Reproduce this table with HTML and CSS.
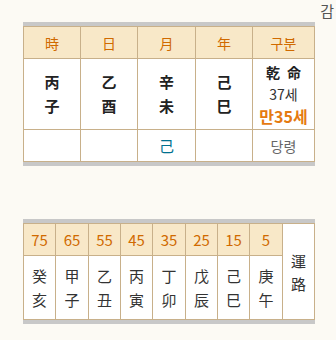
FILE: index.html
```html
<!DOCTYPE html>
<html lang="ko">
<head>
<meta charset="utf-8">
<link rel="stylesheet" href="styles.css">
</head>
<body>
<div class="topline"><span class="cut">감</span></div>

<div class="band">
  <div class="saju">
    <div class="h">時</div>
    <div class="h">日</div>
    <div class="h">月</div>
    <div class="h">年</div>
    <div class="h">구분</div>

    <div class="c pillar">丙<br>子</div>
    <div class="c pillar">乙<br>酉</div>
    <div class="c pillar">辛<br>未</div>
    <div class="c pillar">己<br>巳</div>
    <div class="c info">
      <div class="gm">乾 命</div>
      <div class="age">37세</div>
      <div class="man">만35세</div>
    </div>

    <div class="c"></div>
    <div class="c"></div>
    <div class="c blue">己</div>
    <div class="c"></div>
    <div class="c grey">당령</div>
  </div>
</div>

<div class="band second">
  <div class="daeun">
    <div class="h">75</div>
    <div class="h">65</div>
    <div class="h">55</div>
    <div class="h">45</div>
    <div class="h">35</div>
    <div class="h">25</div>
    <div class="h">15</div>
    <div class="h">5</div>
    <div class="c label">運<br>路</div>

    <div class="c ju">癸<br>亥</div>
    <div class="c ju">甲<br>子</div>
    <div class="c ju">乙<br>丑</div>
    <div class="c ju">丙<br>寅</div>
    <div class="c ju">丁<br>卯</div>
    <div class="c ju">戊<br>辰</div>
    <div class="c ju">己<br>巳</div>
    <div class="c ju">庚<br>午</div>
  </div>
</div>
</body>
</html>
```

FILE: styles.css
```css
html, body {
  margin: 0;
  padding: 0;
  background: #fcfaf4;
  font-family: "Noto Sans CJK KR", "Noto Sans", sans-serif;
}

.topline {
  height: 22px;
  display: flex;
  justify-content: flex-end;
  padding-right: 2px;
}

.cut {
  font-size: 15px;
  line-height: 22px;
  color: #555;
}

.band {
  width: 292px;
  margin-left: 23px;
  border-top: 4px solid #c8c8c8;
  border-bottom: 4px solid #c8c8c8;
}

.second {
  margin-top: 53px;
}

.saju,
.daeun {
  display: grid;
  background: #c8b08a;
  padding: 1px;
  gap: 1px;
}

.saju {
  grid-template-columns: 56px 56px 57px 56px 61px;
  grid-template-rows: 31px 70px 31px;
}

.daeun {
  grid-template-columns: 31px 32px 31px 31px 32px 31px 31px 32px 31px;
  grid-template-rows: 31px 63px;
}

.h {
  background: #f8e8c8;
  color: #d06a00;
  font-size: 14px;
  display: flex;
  align-items: center;
  justify-content: center;
}

.daeun .h {
  font-size: 15px;
}

.c {
  background: #ffffff;
  display: flex;
  flex-direction: column;
  align-items: center;
  justify-content: center;
  text-align: center;
  color: #333;
}

.pillar {
  font-size: 15px;
  font-weight: bold;
  line-height: 24px;
  color: #222;
}

.info {
  line-height: 22px;
}

.gm {
  font-size: 14px;
  font-weight: bold;
  color: #222;
  word-spacing: 3px;
}

.age {
  font-size: 14px;
  color: #333;
}

.man {
  font-size: 16px;
  color: #e57a10;
  font-weight: bold;
}

.blue {
  color: #00708f;
  font-size: 15px;
}

.grey {
  color: #666;
  font-size: 14px;
}

.ju {
  font-size: 15px;
  line-height: 24px;
  color: #333;
}

.label {
  grid-column: 9;
  grid-row: 1 / span 2;
  font-size: 15px;
  line-height: 23px;
  color: #333;
}
```
